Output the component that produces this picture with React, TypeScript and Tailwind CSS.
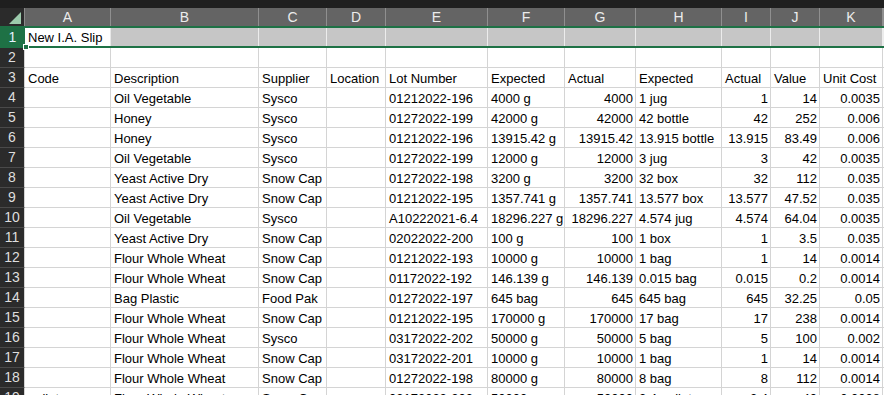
const cols = 'grid grid-cols-[86px_148px_68px_59px_102px_77px_71px_86px_49px_49px_63px_1fr]'

// [text, right aligned]
type Cell = [string, boolean]

const rows: string[][] = [
  ['', 'Oil Vegetable', 'Sysco', '', '01212022-196', '4000 g', '4000', '1 jug', '1', '14', '0.0035'],
  ['', 'Honey', 'Sysco', '', '01272022-199', '42000 g', '42000', '42 bottle', '42', '252', '0.006'],
  ['', 'Honey', 'Sysco', '', '01212022-196', '13915.42 g', '13915.42', '13.915 bottle', '13.915', '83.49', '0.006'],
  ['', 'Oil Vegetable', 'Sysco', '', '01272022-199', '12000 g', '12000', '3 jug', '3', '42', '0.0035'],
  ['', 'Yeast Active Dry', 'Snow Cap', '', '01272022-198', '3200 g', '3200', '32 box', '32', '112', '0.035'],
  ['', 'Yeast Active Dry', 'Snow Cap', '', '01212022-195', '1357.741 g', '1357.741', '13.577 box', '13.577', '47.52', '0.035'],
  ['', 'Oil Vegetable', 'Sysco', '', 'A10222021-6.4', '18296.227 g', '18296.227', '4.574 jug', '4.574', '64.04', '0.0035'],
  ['', 'Yeast Active Dry', 'Snow Cap', '', '02022022-200', '100 g', '100', '1 box', '1', '3.5', '0.035'],
  ['', 'Flour Whole Wheat', 'Snow Cap', '', '01212022-193', '10000 g', '10000', '1 bag', '1', '14', '0.0014'],
  ['', 'Flour Whole Wheat', 'Snow Cap', '', '01172022-192', '146.139 g', '146.139', '0.015 bag', '0.015', '0.2', '0.0014'],
  ['', 'Bag Plastic', 'Food Pak', '', '01272022-197', '645 bag', '645', '645 bag', '645', '32.25', '0.05'],
  ['', 'Flour Whole Wheat', 'Snow Cap', '', '01212022-195', '170000 g', '170000', '17 bag', '17', '238', '0.0014'],
  ['', 'Flour Whole Wheat', 'Sysco', '', '03172022-202', '50000 g', '50000', '5 bag', '5', '100', '0.002'],
  ['', 'Flour Whole Wheat', 'Snow Cap', '', '03172022-201', '10000 g', '10000', '1 bag', '1', '14', '0.0014'],
  ['', 'Flour Whole Wheat', 'Snow Cap', '', '01272022-198', '80000 g', '80000', '8 bag', '8', '112', '0.0014'],
  ['pallet', 'Flour Whole Wheat', 'Snow Cap', '', '03172022-203', '50000 g', '50000', '2.4 pallet', '2.4', '40', '0.0008'],
]

const headers = ['Code', 'Description', 'Supplier', 'Location', 'Lot Number', 'Expected', 'Actual', 'Expected', 'Actual', 'Value', 'Unit Cost']
const letters = ['A', 'B', 'C', 'D', 'E', 'F', 'G', 'H', 'I', 'J', 'K', '']
// numeric columns are right aligned
const numeric = [false, false, false, false, false, false, true, false, true, true, true]

function RowHead({ n }: { n: number }) {
  return (
    <div className="w-[25px] h-[20px] flex-shrink-0 bg-[#2b2b2b] border-b border-[#4a4a4a] border-r border-r-[#d4d4d4] text-[#dedede] text-[14px] leading-[19px] text-center">
      {n}
    </div>
  )
}

function DataRow({ n, cells }: { n: number; cells: Cell[] }) {
  return (
    <div className="flex">
      <RowHead n={n} />
      <div className={`${cols} flex-1`}>
        {cells.map(([t, right], i) => (
          <div
            key={i}
            className={`h-[20px] border-r border-b border-[#d4d4d4] pt-[2px] leading-[17px] whitespace-nowrap overflow-hidden text-black ${right ? 'text-right pl-[2px] pr-[2px]' : 'text-left pl-[3px]'}`}
          >
            {t}
          </div>
        ))}
        <div className="h-[20px] border-b border-[#d4d4d4]" />
      </div>
    </div>
  )
}

export default function App() {
  return (
    <div className="w-[884px] h-[395px] overflow-hidden bg-white font-['Liberation_Sans',Arial,sans-serif] text-[13px]">
      <div className="h-[8px] bg-[#1f1f1f]" />

      {/* column letters */}
      <div className="flex h-[18px]">
        <div className="w-[25px] flex-shrink-0 bg-[#2b2b2b] relative border-r border-[#8a8a8a]">
          <div className="absolute right-[3px] bottom-[2px] w-0 h-0 border-l-[12px] border-l-transparent border-b-[12px] border-b-[#9ccbac]" />
        </div>
        <div className={`${cols} flex-1 bg-[#646464]`}>
          {letters.map((l, i) => (
            <div key={i} className="h-[18px] border-r border-[#8f8f8f] text-[#ececec] text-center leading-[18px] text-[14px]">
              {l}
            </div>
          ))}
        </div>
      </div>

      {/* row 1, selected */}
      <div className="flex">
        <div className="w-[25px] h-[22px] flex-shrink-0 bg-[#1e7145] text-[#e4f3ff] text-center leading-[22px] text-[14px]">1</div>
        <div className="flex-1 relative border-y-2 border-[#1e7145]">
          <div className={cols}>
            <div className="h-[18px] bg-white pl-[3px] pt-[1px] leading-[17px] whitespace-nowrap text-black border-r border-[#e8e8e8]">New I.A. Slip</div>
            {Array.from({ length: 11 }).map((_, i) => (
              <div key={i} className="h-[18px] bg-[#c6c6c6] border-r border-[#ececec]" />
            ))}
          </div>
          <div className="absolute left-[-2px] bottom-[-4px] w-[6px] h-[6px] bg-[#1e7145] border border-white" />
        </div>
      </div>

      <DataRow n={2} cells={Array.from({ length: 11 }, () => ['', false] as Cell)} />
      <DataRow n={3} cells={headers.map(h => [h, false] as Cell)} />
      {rows.map((r, i) => (
        <DataRow key={i} n={i + 4} cells={r.map((t, j) => [t, numeric[j]] as Cell)} />
      ))}
    </div>
  )
}
